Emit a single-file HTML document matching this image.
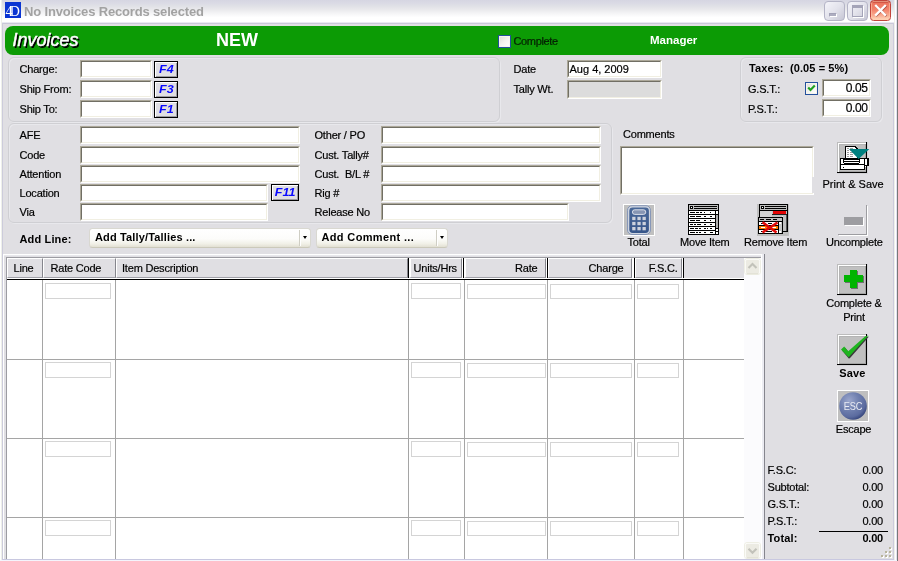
<!DOCTYPE html>
<html lang="en">
<head>
<meta charset="utf-8">
<title>No Invoices Records selected</title>
<style>
html,body{margin:0;padding:0;}
body{width:898px;height:561px;overflow:hidden;position:relative;background:#e0dfe3;will-change:opacity;
 font-family:"Liberation Sans",Arial,sans-serif;font-size:11px;color:#000;line-height:13px;letter-spacing:-0.2px;-webkit-text-stroke:0.2px #000;}
.a{position:absolute;white-space:nowrap;}
.L{will-change:opacity;}
.b{font-weight:bold;letter-spacing:0.15px;-webkit-text-stroke:0;}
/* title bar */
#tb{left:0;top:0;width:898px;height:24px;
 background:linear-gradient(to bottom,#d6d6e2 0px,#dbdbe5 3.5px,#e1e2e7 6.5px,#e9e9ec 9.5px,#f2f2f4 12.5px,#fafafb 15.5px,#ffffff 17.5px,#ffffff 21.8px,#e9e9f1 22.5px,#c9c8d8 23.2px,#c9c8d8 24px);}
#ttl{-webkit-text-stroke:0;left:24px;top:3px;font-family:"Liberation Sans",sans-serif;font-weight:bold;font-size:13px;line-height:18px;color:#a2a2a2;letter-spacing:-0.16px;}
#ico{left:5px;top:2px;width:16px;height:16px;background:#0a35d2;overflow:hidden;}
#ico span{-webkit-text-stroke:0;position:absolute;left:0.5px;top:1.5px;font-family:"Liberation Serif",serif;font-size:14px;line-height:16px;color:#fff;letter-spacing:-2.8px;}
.wb{top:0.5px;width:21px;height:20.5px;box-sizing:border-box;border:1px solid #b4b4c6;border-radius:4px;
 background:linear-gradient(135deg,#f4f4f9 0%,#e3e3ec 50%,#c6c6d4 100%);}
#wclose{border-color:#c2453c;border-radius:3.5px;background:linear-gradient(to bottom,#c4483a 0px,#c4483a 1px,#ee7660 2.5px,#f3846c 9px,#f9a78c 14px,#ffdcbf 19px);box-shadow:inset 0 0 0 1px rgba(255,200,170,0.55);}
/* frame */
#fl0{left:0;top:0px;width:2px;height:561px;background:linear-gradient(to right,#fff 0px,#fff 1px,#eef0ea 1px,#eef0ea 2px);}
#fl1{left:2px;top:23px;width:1px;height:537px;background:#cccbdb;}
#fr0{left:893px;top:23px;width:1px;height:538px;background:#cccbdb;}
#fr1{left:894px;top:0px;width:3px;height:561px;background:linear-gradient(to right,#eef0ea 0px,#eef0ea 1px,#fff 1px,#fff 2px,#e2e2f0 2px,#e2e2f0 3px);}
#fr2{left:897px;top:0px;width:1px;height:561px;background:#787878;}
#fb0{left:2px;top:559px;width:892px;height:1px;background:#c8c8e0;}
#fb1{left:0;top:560px;width:897px;height:1px;background:#f4f4fc;}
/* banner */
#ban{left:5px;top:26px;width:884px;height:29px;background:#0c9b05;border-radius:8px;}
#inv{left:12.5px;top:28px;letter-spacing:0;font-size:18px;line-height:24px;font-weight:normal;font-style:italic;color:#fff;-webkit-text-stroke:0.5px #fff;text-shadow:1px 1px 0 #000,1.5px 1.5px 0 #000;}
#new{-webkit-text-stroke:0;left:216px;top:28px;letter-spacing:0;font-size:18px;line-height:24px;font-weight:bold;color:#fff;}
#mgr{-webkit-text-stroke:0;left:650px;top:34px;font-size:11.5px;font-weight:bold;color:#fff;letter-spacing:0;}
/* group boxes */
.g{box-sizing:border-box;border:1px solid #cfcfd3;border-radius:6px;box-shadow:1px 1px 0 #e8e8ec, inset 1px 1px 0 #e8e8ec;}
/* inputs */
.i{box-sizing:border-box;height:18px;background:#fff;border:1px solid;border-color:#aca899 #fff #fff #aca899;}
.i:before{content:"";position:absolute;left:0;top:0;right:0;bottom:0;border:1px solid;border-color:#716f64 #f1efe2 #f1efe2 #716f64;}
.i.d{background:#dcdcdc;}
.i span{position:absolute;top:2px;line-height:13px;will-change:opacity;}
/* F buttons */
.f{-webkit-text-stroke:0;box-sizing:border-box;height:17px;border:1px solid #000;background:#e0dfe3;box-shadow:inset 1px 1px 0 #fff, inset -1px -1px 0 #9a9aa0;
 color:#0a0aff;font-weight:bold;font-style:italic;font-size:11px;line-height:15px;text-align:center;letter-spacing:0;}
.f b{display:inline-block;transform:scaleX(1.14);will-change:opacity;}
/* checkbox */
.cb{box-sizing:border-box;width:13px;height:13px;border:1px solid #23509c;background:linear-gradient(135deg,#dcdcd7 0%,#f3f3ef 50%,#ffffff 100%);box-shadow:inset 0 0 0 1px #f6f4ee;}
/* dropdown */
.dd{box-sizing:border-box;height:20px;border:1px solid #d9d8d1;border-bottom-color:#cbc9ba;border-radius:3.5px;background:linear-gradient(to bottom,#ffffff 0%,#fcfcfa 55%,#f1f0e7 82%,#e2e0d3 100%);
 font-weight:bold;line-height:17px;letter-spacing:0.15px;-webkit-text-stroke:0;}
.dd i{position:absolute;right:10px;top:1px;width:1px;height:16px;background:#cfcec4;box-shadow:1px 0 0 #fff;}
.dd u{position:absolute;right:3.5px;top:7px;width:0;height:0;border-left:2.5px solid transparent;border-right:2.5px solid transparent;border-top:3px solid #000;}
/* icon buttons */
.ib{box-sizing:border-box;width:31px;height:31px;background:#c0c0c0;}
.ib.r{border:1px solid;border-color:#fff #000 #000 #fff;box-shadow:inset -1px -1px 0 #808080;}
/* table */
#tbl{left:3px;top:254px;width:763px;height:306px;box-sizing:border-box;}
.th{top:258px;height:20px;box-sizing:border-box;background:#e0dfe3;border:1px solid;border-color:#fff #85858c #a0a0a8 #fff;line-height:19px;}
.vl{width:1px;background:#a5a5a5;top:280px;height:279px;}
.hl{height:1px;background:#a5a5a5;left:7px;width:737px;}
.c{box-sizing:border-box;height:15px;border:1px solid #d4d4d4;background:#fff;}
.hs{top:258px;width:1px;height:20px;background:#000;}
</style>
</head>
<body>
<!-- TITLEBAR -->
<div class="a" id="tb"></div>
<div class="a" id="ico"><span class="L">4D</span></div>
<div class="a L" id="ttl">No Invoices Records selected</div>
<div class="a wb" id="wmin" style="left:824px;width:20.5px"><div class="a" style="left:3.5px;top:11.5px;width:8px;height:4px;background:#adadc0;border:1px solid #fff;border-top-color:#a2a2b6;border-left-color:#a2a2b6;box-sizing:border-box"></div></div>
<div class="a wb" id="wmax" style="left:847px;width:20.5px"><div class="a" style="left:3.5px;top:3.5px;width:11.5px;height:11.5px;box-sizing:border-box;border:1px solid #a4a4b8;border-top-width:3px;box-shadow:1px 1px 0 #fff"></div></div>
<div class="a wb" id="wclose" style="left:870px;top:0;height:21px"><svg class="a" style="left:0;top:0" width="19" height="19" viewBox="0 0 19 19"><path d="M4.8 4.6 L15.4 15.2 M15.4 4.6 L4.8 15.2" stroke="#7a2a20" stroke-width="2.4" fill="none" opacity="0.55"/><path d="M4.2 4 L14.8 14.6 M14.8 4 L4.2 14.6" stroke="#fff" stroke-width="2.3" fill="none"/></svg></div>
<!-- FRAME -->
<div class="a" id="fl0"></div><div class="a" id="fl1"></div>
<div class="a" id="fr0"></div><div class="a" id="fr1"></div><div class="a" id="fr2"></div>
<div class="a" id="fb0"></div><div class="a" id="fb1"></div>
<!-- BANNER -->
<div class="a" id="ban"></div>
<div class="a L" id="inv">Invoices</div>
<div class="a L" id="new">NEW</div>
<div class="a cb" style="left:498px;top:35px"></div>
<div class="a L" style="left:513.5px;top:35px;color:#062a04;letter-spacing:-0.35px">Complete</div>
<div class="a L" id="mgr">Manager</div>
<!-- SECTION1 -->
<div class="a g" style="left:8px;top:57px;width:492px;height:65px"></div>
<div class="a" style="left:19.5px;top:63px">Charge:</div>
<div class="a" style="left:19.5px;top:83px">Ship From:</div>
<div class="a" style="left:19.5px;top:103px">Ship To:</div>
<div class="a i" style="left:80px;top:60px;width:72px"></div>
<div class="a i" style="left:80px;top:80px;width:72px"></div>
<div class="a i" style="left:80px;top:100px;width:72px"></div>
<div class="a f" style="left:154px;top:61px;width:24px"><b>F4</b></div>
<div class="a f" style="left:154px;top:81px;width:24px"><b>F3</b></div>
<div class="a f" style="left:154px;top:101px;width:24px"><b>F1</b></div>
<div class="a" style="left:513.5px;top:63px">Date</div>
<div class="a" style="left:513.5px;top:83px">Tally Wt.</div>
<div class="a i" style="left:567px;top:60px;width:95px"><span style="left:1.5px;letter-spacing:0">Aug 4, 2009</span></div>
<div class="a i d" style="left:567px;top:80px;width:95px;height:19px"></div>
<div class="a g" style="left:740px;top:57px;width:142px;height:65px"></div>
<div class="a b" style="left:749px;top:62px;letter-spacing:0.1px">Taxes:&nbsp; (0.05 = 5%)</div>
<div class="a" style="left:748px;top:83px">G.S.T.:</div>
<div class="a" style="left:748px;top:103px">P.S.T.:</div>
<div class="a cb" style="left:805px;top:82px"><svg class="a" style="left:1px;top:1px" width="9" height="9" viewBox="0 0 9 9"><path d="M1.2 3.6 L3.5 6 L7.8 1.6" stroke="#21a121" stroke-width="2.2" fill="none"/></svg></div>
<div class="a i" style="left:822px;top:79px;width:49px"><span style="right:2.5px;font-size:12px;letter-spacing:-0.4px">0.05</span></div>
<div class="a i" style="left:822px;top:99px;width:49px"><span style="right:2.5px;font-size:12px;letter-spacing:-0.4px">0.00</span></div>
<!-- SECTION2 -->
<div class="a g" style="left:8px;top:123px;width:604px;height:100px"></div>
<div class="a" style="left:19.5px;top:129px">AFE</div>
<div class="a" style="left:19.5px;top:149px">Code</div>
<div class="a" style="left:19.5px;top:168px">Attention</div>
<div class="a" style="left:19.5px;top:187px">Location</div>
<div class="a" style="left:19.5px;top:206px">Via</div>
<div class="a i" style="left:80px;top:126px;width:220px"></div>
<div class="a i" style="left:80px;top:146px;width:220px"></div>
<div class="a i" style="left:80px;top:165px;width:220px"></div>
<div class="a i" style="left:80px;top:184px;width:188px"></div>
<div class="a i" style="left:80px;top:203px;width:188px"></div>
<div class="a f" style="left:271px;top:184px;width:28px"><b>F11</b></div>
<div class="a" style="left:314.5px;top:129px">Other / PO</div>
<div class="a" style="left:314.5px;top:149px">Cust. Tally#</div>
<div class="a" style="left:314.5px;top:168px">Cust.&nbsp; B/L #</div>
<div class="a" style="left:314.5px;top:187px">Rig #</div>
<div class="a" style="left:314.5px;top:206px">Release No</div>
<div class="a i" style="left:381px;top:126px;width:220px"></div>
<div class="a i" style="left:381px;top:146px;width:220px"></div>
<div class="a i" style="left:381px;top:165px;width:220px"></div>
<div class="a i" style="left:381px;top:184px;width:220px"></div>
<div class="a i" style="left:381px;top:203px;width:188px"></div>
<div class="a" style="left:623px;top:128px">Comments</div>
<div class="a i" style="left:620px;top:146px;width:194px;height:49px"></div>
<div class="a b" style="left:19.5px;top:233px">Add Line:</div>
<div class="a dd" style="left:89px;top:228px;width:222px"><span class="a L" style="left:5px;top:0">Add Tally/Tallies ...</span><i></i><u></u></div>
<div class="a dd" style="left:316px;top:228px;width:132px"><span class="a L" style="left:4.5px;top:0;letter-spacing:0.35px">Add Comment ...</span><i></i><u></u></div>
<!-- SECTION3 -->
<div class="a" style="left:623px;top:204px;width:32px;height:32px;box-sizing:border-box;border:1px solid #fff;background:#c0c0c0"></div>
<svg class="a" style="left:623px;top:204px" width="32" height="32" viewBox="0 0 32 32">
<defs><linearGradient id="cg" x1="0" y1="0" x2="0" y2="1"><stop offset="0" stop-color="#4a6898"/><stop offset="1" stop-color="#37568a"/></linearGradient></defs>
<rect x="4.5" y="1.7" width="23" height="28.8" rx="4.5" fill="#cfd5e0" stroke="#8797b8" stroke-width="1"/>
<rect x="6.3" y="3.4" width="19.6" height="25.6" rx="3.4" fill="url(#cg)"/>
<rect x="9.4" y="5.8" width="13.4" height="4.6" rx="2.3" fill="#8796b4" stroke="#e6eaf2" stroke-width="0.9"/>
<g fill="#cdd2dd">
<rect x="9.2" y="12.8" width="3.3" height="3.3"/><rect x="14.4" y="12.8" width="3.3" height="3.3"/><rect x="19.5" y="12.8" width="3.3" height="3.3"/>
<rect x="9.2" y="17.9" width="3.3" height="3.3"/><rect x="14.4" y="17.9" width="3.3" height="3.3"/><rect x="19.5" y="17.9" width="3.3" height="3.3"/>
<rect x="9.2" y="23" width="3.3" height="3.3"/><rect x="14.4" y="23" width="3.3" height="3.3"/><rect x="19.5" y="23" width="3.3" height="3.3"/>
</g></svg>
<div class="a" style="left:627.5px;top:236px">Total</div>
<svg class="a" style="left:688px;top:204px" width="31" height="31" viewBox="0 0 31 31" shape-rendering="crispEdges">
<rect x="0" y="0" width="31" height="31" fill="#000"/>
<rect x="1" y="1" width="29" height="5" fill="#c0c0c0"/>
<rect x="2" y="2" width="3" height="3" fill="#000"/><rect x="3" y="3" width="1" height="1" fill="#fff"/>
<rect x="6" y="2" width="23" height="1" fill="#000"/><rect x="6" y="4" width="23" height="1" fill="#000"/>
<rect x="1" y="7" width="26" height="3" fill="#fff"/><rect x="2" y="8" width="5" height="1" fill="#000"/><rect x="8" y="8" width="3" height="1" fill="#000"/><rect x="12" y="8" width="2" height="1" fill="#000"/><rect x="16" y="8" width="1" height="1" fill="#000"/><rect x="22" y="8" width="1" height="1" fill="#000"/><rect x="1" y="11" width="26" height="3" fill="#fff"/><rect x="2" y="12" width="5" height="1" fill="#000"/><rect x="8" y="12" width="5" height="1" fill="#000"/><rect x="16" y="12" width="2" height="1" fill="#000"/><rect x="22" y="12" width="2" height="1" fill="#000"/><rect x="1" y="15" width="26" height="3" fill="#fff"/><rect x="2" y="16" width="5" height="1" fill="#000"/><rect x="8" y="16" width="4" height="1" fill="#000"/><rect x="16" y="16" width="2" height="1" fill="#000"/><rect x="22" y="16" width="1" height="1" fill="#000"/><rect x="1" y="19" width="26" height="3" fill="#fff"/><rect x="2" y="20" width="3" height="1" fill="#000"/><rect x="6" y="20" width="2" height="1" fill="#000"/><rect x="9" y="20" width="4" height="1" fill="#000"/><rect x="16" y="20" width="2" height="1" fill="#000"/><rect x="22" y="20" width="2" height="1" fill="#000"/><rect x="1" y="23" width="26" height="3" fill="#fff"/><rect x="2" y="24" width="4" height="1" fill="#000"/><rect x="7" y="24" width="3" height="1" fill="#000"/><rect x="11" y="24" width="2" height="1" fill="#000"/><rect x="16" y="24" width="2" height="1" fill="#000"/><rect x="19" y="24" width="1" height="1" fill="#000"/><rect x="22" y="24" width="2" height="1" fill="#000"/><rect x="1" y="27" width="26" height="3" fill="#fff"/><rect x="2" y="28" width="5" height="1" fill="#000"/><rect x="8" y="28" width="2" height="1" fill="#000"/><rect x="11" y="28" width="2" height="1" fill="#000"/><rect x="16" y="28" width="2" height="1" fill="#000"/><rect x="22" y="28" width="3" height="1" fill="#000"/>
<rect x="28" y="7" width="2" height="3" fill="#fff"/><rect x="28" y="11" width="2" height="13" fill="#b0b0b0"/>
<rect x="28" y="25" width="2" height="2" fill="#fff"/><rect x="28" y="28" width="2" height="2" fill="#fff"/>
</svg>
<div class="a" style="left:680px;top:236px">Move Item</div>
<svg class="a" style="left:757px;top:204px" width="32" height="32" viewBox="0 0 32 32">
<g shape-rendering="crispEdges">
<rect x="0" y="0" width="32" height="32" fill="#c0c0c0"/>
<rect x="2" y="0" width="29" height="28" fill="#000"/>
<rect x="3" y="1" width="27" height="5" fill="#c0c0c0"/>
<rect x="4" y="2" width="3" height="3" fill="#000"/><rect x="5" y="3" width="1" height="1" fill="#fff"/>
<rect x="8" y="2" width="21" height="1" fill="#000"/><rect x="8" y="4" width="21" height="1" fill="#000"/>
<rect x="3" y="7" width="27" height="20" fill="#c0c0c0"/>
<rect x="3" y="7" width="12" height="6" fill="#d2d2d2"/>
<rect x="16" y="7" width="13" height="3" fill="#e40505"/>
<rect x="15" y="10" width="15" height="1" fill="#202020"/>
<rect x="25" y="12" width="1" height="15" fill="#eee"/><rect x="29" y="11" width="1" height="16" fill="#555"/>
<rect x="1" y="13" width="25" height="17" fill="#000"/>
<rect x="2" y="14" width="23" height="3" fill="#c0c0c0"/>
<rect x="3" y="15" width="4" height="1" fill="#000"/><rect x="9" y="15" width="5" height="1" fill="#000"/><rect x="16" y="15" width="4" height="1" fill="#000"/>
<rect x="2" y="18" width="19" height="3" fill="#fff"/><rect x="4" y="19" width="5" height="1" fill="#000"/><rect x="11" y="19" width="4" height="1" fill="#000"/>
<rect x="2" y="22" width="19" height="3" fill="#ff7a00"/><rect x="4" y="23" width="4" height="1" fill="#fff"/><rect x="15" y="23" width="4" height="1" fill="#fff"/>
<rect x="2" y="26" width="19" height="3" fill="#fff"/><rect x="4" y="27" width="3" height="1" fill="#000"/><rect x="9" y="27" width="6" height="1" fill="#000"/>
<rect x="22" y="18" width="3" height="11" fill="#c8c8c8"/>
<rect x="22" y="18" width="2" height="2" fill="#fff"/><rect x="22" y="27" width="2" height="2" fill="#fff"/>
</g>
<path d="M5.5 18.2 L19.5 28.5 M20.5 18.5 L5.5 28.5" stroke="#e00808" stroke-width="2.5" fill="none"/>
</svg>
<div class="a" style="left:744px;top:236px">Remove Item</div>
<svg class="a" style="left:837px;top:204px" width="32" height="32" viewBox="0 0 32 32" shape-rendering="crispEdges">
<rect x="30" y="2" width="1" height="30" fill="#fff"/><rect x="2" y="31" width="29" height="1" fill="#fff"/>
<rect x="29" y="1" width="1" height="30" fill="#9d9da1"/><rect x="1" y="30" width="29" height="1" fill="#9d9da1"/>
<rect x="8" y="14" width="19" height="8" fill="#fff"/>
<rect x="7" y="13" width="19" height="8" fill="#9d9da1"/>
</svg>
<div class="a" style="left:826px;top:236px">Uncomplete</div>
<svg class="a" style="left:837px;top:142px" width="33" height="32" viewBox="0 0 33 32">
<g shape-rendering="crispEdges">
<rect x="0" y="0" width="31" height="32" fill="#d2d2d6"/>
<rect x="0" y="0" width="30" height="31" fill="#000"/>
<rect x="0" y="0" width="29" height="30" fill="#bcbcbc"/>
<rect x="1" y="1" width="28" height="29" fill="#fff"/>
<rect x="2" y="2" width="27" height="28" fill="#a4a4a4"/>
<rect x="2" y="2" width="26" height="27" fill="#b4b4b4"/>
<rect x="3" y="3" width="25" height="26" fill="#c0c0c0"/>
<!-- paper -->
<path d="M8 4 H18 L21 7 V17 H8 Z" fill="#000"/>
<path d="M9 5 H17.5 L20 7.5 V17 H9 Z" fill="#fff"/>
<g fill="#9a9a9a"><rect x="10" y="6" width="2" height="1"/><rect x="13" y="6" width="3" height="1"/>
<rect x="10" y="8" width="2" height="1"/><rect x="13" y="8" width="3" height="1"/>
<rect x="10" y="10" width="2" height="1"/><rect x="13" y="10" width="3" height="1"/>
<rect x="10" y="12" width="2" height="1"/><rect x="13" y="12" width="3" height="1"/>
<rect x="10" y="14" width="2" height="1"/><rect x="13" y="14" width="3" height="1"/></g>
<!-- printer -->
<rect x="3" y="16" width="29" height="12" fill="#000"/>
<rect x="4" y="17" width="24" height="5" fill="#fff"/>
<rect x="6" y="17" width="17" height="1" fill="#000"/>
<rect x="6" y="18" width="1" height="3" fill="#000"/><rect x="22" y="18" width="1" height="3" fill="#000"/>
<rect x="7" y="19" width="15" height="1" fill="#000"/>
<rect x="7" y="21" width="15" height="1" fill="#000"/>
<rect x="27" y="17" width="1" height="6" fill="#000"/><rect x="28" y="17" width="2" height="6" fill="#fff"/>
<rect x="4" y="23" width="23" height="4" fill="#fff"/>
<rect x="28" y="24" width="1" height="5" fill="#b0b0b0"/><rect x="28" y="24" width="1" height="1" fill="#fff"/>
<rect x="29" y="24" width="1" height="6" fill="#000"/>
<rect x="30" y="24" width="2" height="8" fill="#d2d2d6"/><rect x="31" y="24" width="1" height="8" fill="#e0dfe3"/>
<rect x="6" y="25" width="1" height="1" fill="#000"/>
</g>
<path d="M12 7 H32.3 L21.6 17 Z" fill="#008080"/>
</svg>
<div class="a" style="left:812px;top:177px;width:2px;height:16px;background:#e0dfe3"></div>
<div class="a" style="left:822.5px;top:178px;letter-spacing:0">Print &amp; Save</div>
<!-- TABLE -->
<div class="a" style="left:3px;top:254px;width:761px;height:2px;background:linear-gradient(to bottom,#fff 0,#fff 1px,#e8e8ec 1px,#e8e8ec 2px)"></div>
<div class="a" style="left:3px;top:254px;width:1px;height:305px;background:#fff"></div>
<div class="a" style="left:6px;top:257px;width:755px;height:302px;background:#fff"></div>
<div class="a" style="left:6px;top:257px;width:755px;height:1px;background:#9c9ca2"></div>
<div class="a" style="left:6px;top:257px;width:1px;height:302px;background:#9c9ca2"></div>
<div class="a" style="left:761px;top:254px;width:1px;height:305px;background:#fff"></div>
<div class="a" style="left:762px;top:254px;width:2px;height:305px;background:#ececf2"></div>
<div class="a" style="left:764px;top:254px;width:1px;height:305px;background:#85858d"></div>
<div class="a" style="left:744px;top:258px;width:17px;height:301px;background:#fbfbfd"></div>
<div class="a" style="left:7px;top:258px;width:737px;height:21px;background:#e0dfe3"></div>
<div class="a" style="left:409px;top:258px;width:274px;height:20px;background:#fff"></div>
<div class="a th" style="left:7px;width:36px;border-left-width:1px;padding-left:5.5px"><span class="L" style="display:inline-block">Line</span></div>
<div class="a th" style="left:43px;width:73px;border-left-width:1px;padding-left:6.5px"><span class="L" style="display:inline-block">Rate Code</span></div>
<div class="a th" style="left:116px;width:292px;border-left-width:1px;padding-left:5px"><span class="L" style="display:inline-block">Item Description</span></div>
<div class="a th" style="left:409px;width:53px;border-left-width:2px;padding-left:2.5px"><span class="L" style="display:inline-block">Units/Hrs</span></div>
<div class="a th" style="left:464px;width:82px;border-left-width:2px;padding-right:7.5px;text-align:right"><span class="L" style="display:inline-block">Rate</span></div>
<div class="a th" style="left:548px;width:84px;border-left-width:1px;padding-right:7.5px;text-align:right"><span class="L" style="display:inline-block">Charge</span></div>
<div class="a th" style="left:635px;width:47px;border-left-width:1px;padding-right:3.5px;text-align:right"><span class="L" style="display:inline-block">F.S.C.</span></div>
<div class="a" style="left:7px;top:278px;width:737px;height:1px;background:#fff"></div>
<div class="a" style="left:7px;top:279px;width:737px;height:1px;background:#000"></div>
<div class="a vl" style="left:42px"></div>
<div class="a vl" style="left:115px"></div>
<div class="a vl" style="left:408px"></div>
<div class="a vl" style="left:464px"></div>
<div class="a vl" style="left:547px"></div>
<div class="a vl" style="left:634px"></div>
<div class="a vl" style="left:683px"></div>
<div class="a hs" style="left:408px"></div>
<div class="a hs" style="left:463px"></div>
<div class="a hs" style="left:547px"></div>
<div class="a hs" style="left:634px"></div>
<div class="a hs" style="left:683px"></div>
<div class="a c" style="left:45px;top:283px;width:66px;height:16px"></div>
<div class="a c" style="left:411px;top:283px;width:50px;height:16px"></div>
<div class="a c" style="left:467px;top:284px;width:79px;height:15px"></div>
<div class="a c" style="left:550px;top:284px;width:82px;height:15px"></div>
<div class="a c" style="left:637px;top:284px;width:42px;height:15px"></div>
<div class="a hl" style="top:359px"></div>
<div class="a c" style="left:45px;top:362px;width:66px;height:16px"></div>
<div class="a c" style="left:411px;top:362px;width:50px;height:16px"></div>
<div class="a c" style="left:467px;top:363px;width:79px;height:15px"></div>
<div class="a c" style="left:550px;top:363px;width:82px;height:15px"></div>
<div class="a c" style="left:637px;top:363px;width:42px;height:15px"></div>
<div class="a hl" style="top:438px"></div>
<div class="a c" style="left:45px;top:441px;width:66px;height:16px"></div>
<div class="a c" style="left:411px;top:441px;width:50px;height:16px"></div>
<div class="a c" style="left:467px;top:442px;width:79px;height:15px"></div>
<div class="a c" style="left:550px;top:442px;width:82px;height:15px"></div>
<div class="a c" style="left:637px;top:442px;width:42px;height:15px"></div>
<div class="a hl" style="top:517px"></div>
<div class="a c" style="left:45px;top:520px;width:66px;height:16px"></div>
<div class="a c" style="left:411px;top:520px;width:50px;height:16px"></div>
<div class="a c" style="left:467px;top:521px;width:79px;height:15px"></div>
<div class="a c" style="left:550px;top:521px;width:82px;height:15px"></div>
<div class="a c" style="left:637px;top:521px;width:42px;height:15px"></div>
<svg class="a" style="left:744px;top:258px" width="17" height="17" viewBox="0 0 17 17"><rect x="0.5" y="0.5" width="16" height="16" rx="2.5" fill="#fefefc" stroke="#eeeee4" stroke-width="1"/><rect x="1.8" y="1.8" width="13.4" height="13.4" rx="1.5" fill="#ecebe3"/><path d="M2.5 15.7 H14.5" stroke="#deddcf" stroke-width="1"/><path d="M4.5 10 L8.5 6 L12.5 10" stroke="#c2c2ba" stroke-width="2.1" fill="none"/></svg>
<svg class="a" style="left:744px;top:542px" width="17" height="17" viewBox="0 0 17 17"><rect x="0.5" y="0.5" width="16" height="16" rx="2.5" fill="#fefefc" stroke="#eeeee4" stroke-width="1"/><rect x="1.8" y="1.8" width="13.4" height="13.4" rx="1.5" fill="#ecebe3"/><path d="M2.5 15.7 H14.5" stroke="#deddcf" stroke-width="1"/><path d="M4.5 6.8 L8.5 10.8 L12.5 6.8" stroke="#c2c2ba" stroke-width="2.1" fill="none"/></svg>
<!-- RIGHT -->
<svg class="a" style="left:837px;top:264px" width="32" height="32" viewBox="0 0 32 32" shape-rendering="crispEdges">
<rect x="0" y="0" width="31" height="32" fill="#d2d2d6"/>
<rect x="0" y="0" width="30" height="31" fill="#000"/>
<rect x="0" y="0" width="29" height="30" fill="#bcbcbc"/>
<rect x="1" y="1" width="28" height="29" fill="#fff"/>
<rect x="2" y="2" width="27" height="28" fill="#a4a4a4"/>
<rect x="2" y="2" width="26" height="27" fill="#b4b4b4"/>
<rect x="3" y="3" width="25" height="26" fill="#c0c0c0"/>
<rect x="14" y="7" width="7" height="18" fill="#707070"/><rect x="8" y="12" width="19" height="7" fill="#707070"/>
<rect x="13" y="6" width="7" height="18" fill="#00b400"/><rect x="7" y="11" width="19" height="7" fill="#00b400"/>
</svg>
<div class="a" style="left:804px;top:296px;width:100px;text-align:center;white-space:normal;line-height:14px">Complete &amp;<br>Print</div>
<svg class="a" style="left:837px;top:334px" width="34" height="32" viewBox="0 0 34 32">
<g shape-rendering="crispEdges">
<rect x="0" y="0" width="31" height="32" fill="#d2d2d6"/>
<rect x="0" y="0" width="30" height="31" fill="#000"/>
<rect x="0" y="0" width="29" height="30" fill="#bcbcbc"/>
<rect x="1" y="1" width="28" height="29" fill="#fff"/>
<rect x="2" y="2" width="27" height="28" fill="#a4a4a4"/>
<rect x="2" y="2" width="26" height="27" fill="#b4b4b4"/>
<rect x="3" y="3" width="25" height="26" fill="#c0c0c0"/>
</g>
<path d="M5 16.5 L8.2 13.8 L12 18.6 L29 3.4 L32 2.6 L13.5 23.5 L12 24.8 Z" fill="#3a3a3a"/>
<path d="M4 15.5 L7.2 12.6 L11.2 17.2 L28 2.6 L31.4 1.6 L11.6 23.2 Z" fill="#1eb41e"/>
</svg>
<div class="a b" style="left:804px;top:367px;width:97px;text-align:center">Save</div>
<div class="a" style="left:837px;top:390px;width:32px;height:32px;box-sizing:border-box;border:1px solid #fff;background:#bfbfbf"></div>
<svg class="a" style="left:837px;top:390px" width="32" height="32" viewBox="0 0 32 32">
<defs><radialGradient id="eg" cx="0.36" cy="0.3" r="0.75"><stop offset="0" stop-color="#9aa6cc"/><stop offset="0.45" stop-color="#7181b0"/><stop offset="0.8" stop-color="#5b6b9f"/><stop offset="1" stop-color="#33437a"/></radialGradient></defs>
<circle cx="16" cy="16" r="13.8" fill="url(#eg)"/>
<text x="16" y="20" text-anchor="middle" font-family="Liberation Sans, sans-serif" font-size="10.5" fill="#e9ebf3" textLength="18.5" lengthAdjust="spacingAndGlyphs">ESC</text>
</svg>
<div class="a" style="left:804px;top:423px;width:99px;text-align:center">Escape</div>
<div class="a" style="left:767.5px;top:464px">F.S.C:</div>
<div class="a" style="left:767.5px;top:481px">Subtotal:</div>
<div class="a" style="left:767.5px;top:498px">G.S.T.:</div>
<div class="a" style="left:767.5px;top:515px">P.S.T.:</div>
<div class="a b" style="left:767.5px;top:532px">Total:</div>
<div class="a" style="right:15px;top:464px">0.00</div>
<div class="a" style="right:15px;top:481px">0.00</div>
<div class="a" style="right:15px;top:498px">0.00</div>
<div class="a" style="right:15px;top:515px">0.00</div>
<div class="a b" style="right:15px;top:532px;letter-spacing:-0.2px">0.00</div>
<div class="a" style="left:819px;top:531px;width:69px;height:1px;background:#000"></div>
<svg class="a" style="left:881px;top:546px" width="12" height="12" viewBox="0 0 12 12" shape-rendering="crispEdges">
<g fill="#fff"><rect x="9" y="2" width="2" height="2"/><rect x="5" y="6" width="2" height="2"/><rect x="9" y="6" width="2" height="2"/><rect x="1" y="10" width="2" height="2"/><rect x="5" y="10" width="2" height="2"/><rect x="9" y="10" width="2" height="2"/></g>
<g fill="#b8b49c"><rect x="8" y="1" width="2" height="2"/><rect x="4" y="5" width="2" height="2"/><rect x="8" y="5" width="2" height="2"/><rect x="0" y="9" width="2" height="2"/><rect x="4" y="9" width="2" height="2"/><rect x="8" y="9" width="2" height="2"/></g>
</svg>
</body>
</html>
